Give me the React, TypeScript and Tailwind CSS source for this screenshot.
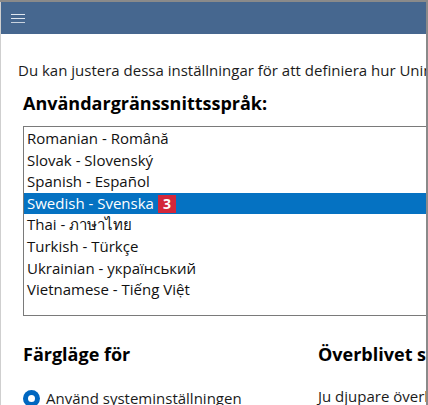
const languages = [
  'Romanian - Română',
  'Slovak - Slovenský',
  'Spanish - Español',
  'Swedish - Svenska',
  'Thai - ภาษาไทย',
  'Turkish - Türkçe',
  'Ukrainian - український',
  'Vietnamese - Tiếng Việt',
]

const font = { fontFamily: '"Open Sans", "Noto Sans", sans-serif' }

export default function App() {
  return (
    <div className="w-[428px] h-[405px] overflow-hidden bg-[#8a8a8a] pt-[2px] pr-[2px]" style={font}>
      <div className="h-full bg-white flex flex-col overflow-hidden border-l border-[#cfcfcf]">
        <header className="h-[32px] shrink-0 bg-[#46678f] flex items-center pl-[11px] -ml-px">
          <div className="flex flex-col gap-[3px] w-[14px]">
            <span className="h-px bg-[#dfe6ef]" />
            <span className="h-px bg-[#dfe6ef]" />
            <span className="h-px bg-[#c9d3df]" />
          </div>
        </header>

        <div className="pl-[17px] pt-[26px] text-[15px] leading-[20px] text-[#1b1b1b] whitespace-nowrap">
          Du kan justera dessa inställningar för att definiera hur Uniment ska se ut.
        </div>

        <div className="pl-[22px]">
          <h2 className="mt-[11px] text-[18px] leading-[24px] font-bold text-black">Användargränssnittsspråk:</h2>

          <div className="mt-[11px] w-[600px] h-[190px] border border-[#7a7a7a] pt-px">
            {languages.map((l, i) => (
              <div
                key={l}
                className={
                  'h-[21.6px] leading-[21.6px] pl-[3px] text-[15px] flex items-center ' +
                  (i === 3 ? 'bg-[#0572c2] text-white' : 'text-[#111]')
                }
              >
                <span>{l}</span>
                {i === 3 && (
                  <span className="ml-[4px] h-[18px] w-[18px] bg-[#d3273a] text-white font-bold text-[14px] leading-[18px] flex items-center justify-center">
                    3
                  </span>
                )}
              </div>
            ))}
          </div>

          <div className="flex mt-[26px]">
            <div className="w-[295px] shrink-0">
              <h3 className="text-[18px] leading-[24px] font-bold text-black">Färgläge för</h3>
              <label className="mt-[21px] flex items-center gap-[6px] text-[15px] text-[#1b1b1b]">
                <span className="w-[17px] h-[17px] rounded-full bg-[#0067c0] flex items-center justify-center">
                  <span className="w-[7px] h-[7px] rounded-full bg-white" />
                </span>
                Använd systeminställningen
              </label>
            </div>
            <div className="whitespace-nowrap">
              <h3 className="text-[18px] leading-[24px] font-bold text-black">Överblivet skript</h3>
              <p className="mt-[19px] text-[15px] text-[#1b1b1b]">Ju djupare överblivet skript</p>
            </div>
          </div>
        </div>
      </div>
    </div>
  )
}
